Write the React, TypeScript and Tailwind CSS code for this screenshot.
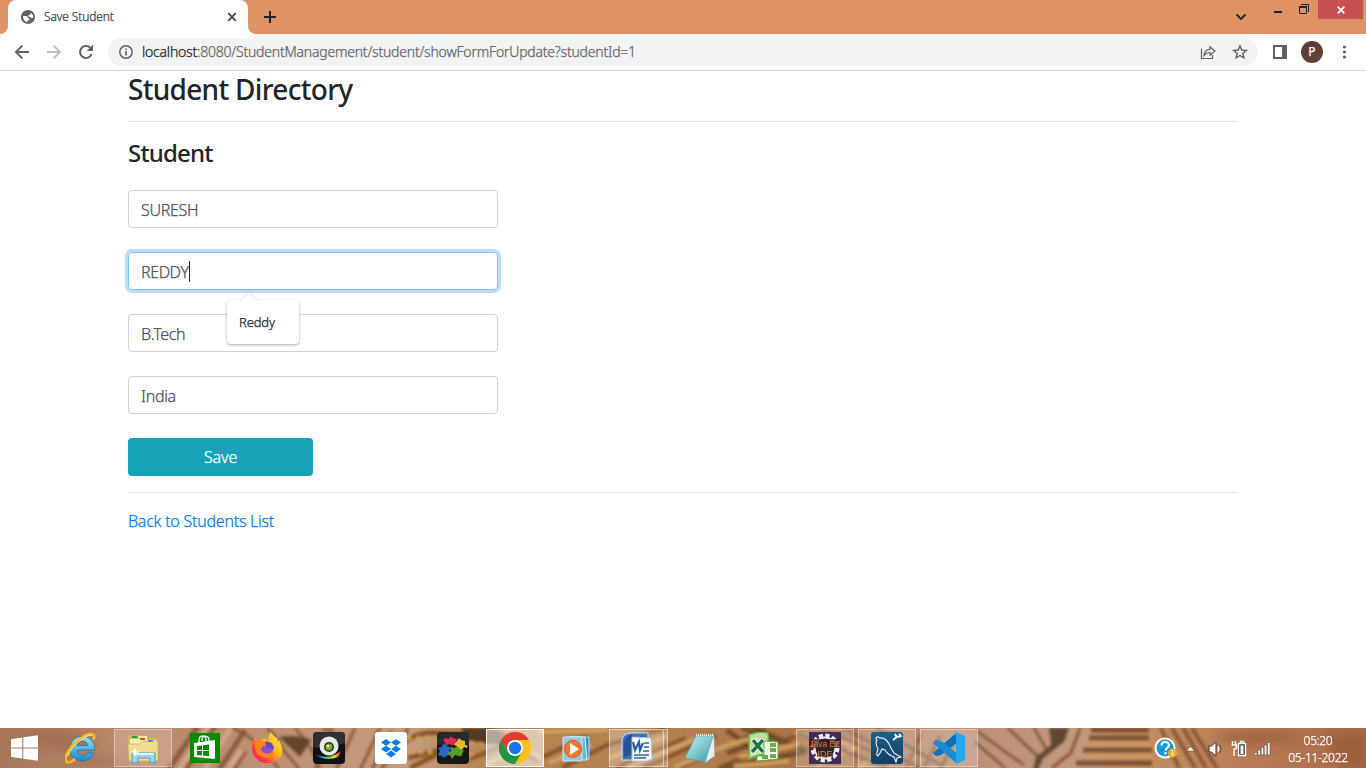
import type { ReactNode } from "react";

const fields = [
  { value: "SURESH", tracking: "tracking-[-0.3px]" },
  { value: "REDDY", tracking: "tracking-[-0.4px]", focused: true },
  { value: "B.Tech", tracking: "tracking-[-0.3px]" },
  { value: "India", tracking: "tracking-[-0.3px]" },
];

function TabStrip() {
  return (
    <header className="flex h-[34px] shrink-0 bg-[#de9266]">
      <svg width="8" height="34" viewBox="0 0 8 34"><path d="M8 26v8H0a8 8 0 0 0 8-8Z" fill="#fff" /></svg>
      <div className="flex h-full w-[240px] items-center rounded-t-[8px] bg-white pl-3 pr-[10px]">
        <svg width="16" height="16" viewBox="0 0 16 16">
          <circle cx="8" cy="8" r="7.1" fill="#5f6368" />
          <path d="M3 7.100h3.200q1.700 0 1.800 1.800l1.400.8v1.500l-2 .4v1.600C4.800 12.800 2.900 10.700 3 7.100ZM8.700 3c.9 0 1.600.3 2.300.7l-.7 1.700-1.800.8-.2 1.400 1.900.3.8 1.100h1.700c0-.7 1-.3 1-.7C13 5.600 11.500 3.200 8.700 3Z" fill="#fff" />
        </svg>
        <span className="ml-2 w-[180px] whitespace-nowrap text-[12px] font-light leading-[16px] tracking-[-0.12px] text-[#3c4043]">Save Student</span>
        <svg className="ml-auto" width="12" height="12" viewBox="0 0 12 12"><path d="m2.200 2.200 7.600 7.600m0-7.600-7.600 7.600" stroke="#3c4043" strokeWidth="1.700" /></svg>
      </div>
      <svg width="8" height="34" viewBox="0 0 8 34"><path d="M0 26v8h8a8 8 0 0 1-8-8Z" fill="#fff" /></svg>
      <svg className="ml-2 mt-[11px]" width="12" height="12" viewBox="0 0 12 12"><path d="M6 0v12M0 6h12" stroke="#202124" strokeWidth="2" /></svg>
      <div className="ml-auto flex">
        <svg className="mt-[13px]" width="12" height="9" viewBox="0 0 12 9"><path d="m1.500 1.500 4.500 4.500 4.500-4.500" fill="none" stroke="#202124" strokeWidth="1.800" /></svg>
        <svg className="ml-[27px] mt-[11px]" width="8" height="2" viewBox="0 0 8 2"><path d="M0 0h8v2H0z" fill="#202124" /></svg>
        <svg className="ml-[17px] mt-1" width="10" height="10" viewBox="0 0 10 10"><path d="M2 .5h7.500V8M.5 3h7v6.500h-7Z" fill="none" stroke="#202124" /><path d="M0 2h8v1.800H0z" fill="#202124" /></svg>
        <div className="ml-[9px] mr-[3px] flex h-[19px] w-[45px] items-center justify-center bg-[#c75050]">
          <svg width="8" height="8" viewBox="0 0 8 8"><path d="m.7.7 6.600 6.600m0-6.600L.7 7.300" stroke="#fff" strokeWidth="1.800" /></svg>
        </div>
      </div>
    </header>
  );
}

function AddressRow() {
  return (
    <div className="flex h-[37px] shrink-0 items-center border-b border-[#d5d7da] bg-white pl-[14px]">
      <svg width="16" height="16" viewBox="0 0 16 16"><path d="M15 8H2m6.300-6.300L2 8l6.300 6.300" fill="none" stroke="#5f6368" strokeWidth="1.900" /></svg>
      <svg className="ml-4" width="16" height="16" viewBox="0 0 16 16"><path d="M1 8h13M7.700 1.700 14 8l-6.300 6.300" fill="none" stroke="#bbbdbf" strokeWidth="1.900" /></svg>
      <svg className="ml-4" width="16" height="16" viewBox="0 0 16 16"><path d="M13.600 10.200a6 6 0 1 1-1.400-6.500L14 5.500" fill="none" stroke="#5f6368" strokeWidth="2" /><path d="M15 .8V7H8.800Z" fill="#5f6368" /></svg>
      <div className="ml-[14px] flex h-7 w-[1150px] items-center rounded-full bg-[#f1f3f4] pl-[11px] pr-[10px]">
        <svg width="14" height="14" viewBox="0 0 14 14"><circle cx="7" cy="7" r="6.200" fill="none" stroke="#5f6368" strokeWidth="1.500" /><path d="M6.200 3.400h1.600V5H6.200zM6.200 6.100h1.600v4.500H6.200z" fill="#5f6368" /></svg>
        <span className="ml-[9px] whitespace-nowrap text-[14px] font-light leading-5 tracking-[-0.21px] text-[#5f6368]"><span className="text-[#202124]">localhost</span>:8080/StudentManagement/student/showFormForUpdate?studentId=1</span>
        <svg className="ml-auto" width="16" height="16" viewBox="0 0 16 16"><path d="M1.500 4.500v10h11V11M4 11.500c.3-4 2.500-6 6-6.200V2.800L15 7l-5 4.200V8.500C7.300 8.400 5.500 9.300 4 11.500Z" fill="none" stroke="#5f6368" strokeWidth="1.200" /></svg>
        <svg className="ml-4" width="16" height="16" viewBox="0 0 16 16"><path d="m8 1.900 1.750 4.150 4.550.4-3.450 3 1.050 4.400L8 11.500l-3.900 2.350 1.050-4.400-3.450-3 4.550-.4Z" fill="none" stroke="#5f6368" strokeWidth="1.400" /></svg>
      </div>
      <svg className="ml-[15px]" width="14" height="14" viewBox="0 0 14 14"><path d="M1 1h12v12H1Z" fill="none" stroke="#5f6368" strokeWidth="2" /><path d="M9 0h5v14H9z" fill="#5f6368" /></svg>
      <div className="ml-[14px] flex size-[22px] items-center justify-center rounded-full bg-[#5d4037] text-[12px] text-white">P</div>
      <svg className="ml-[19px]" width="5" height="14" viewBox="0 0 5 14"><g fill="#5f6368"><circle cx="2.500" cy="2" r="1.600" /><circle cx="2.500" cy="7" r="1.600" /><circle cx="2.500" cy="12" r="1.600" /></g></svg>
    </div>
  );
}

function Suggestion() {
  return (
    <div className="absolute left-[98px] top-[39px] z-10">
      <div className="relative mt-2 h-11 w-[72px] rounded-[4px] bg-white px-3 pt-3 text-[13px] font-light leading-5 tracking-[-0.15px] text-[#202124] shadow-[0_1px_3px_rgba(0,0,0,0.35)]">
        Reddy
        <svg className="absolute -top-2 left-[13px]" width="18" height="10" viewBox="0 0 18 10"><path d="m0 9 9-8 9 8v1H0Z" fill="#fff" /><path d="m.5 8.500 8.500-8 8.500 8" fill="none" stroke="#dcdee0" /></svg>
      </div>
    </div>
  );
}

function StudentPage() {
  return (
    <main className="flex-1 bg-white pl-32 text-[#212529]">
      <h2 className="pt-px text-[28px] font-medium leading-[34px] tracking-[-0.7px] [-webkit-text-stroke:0px]">Student Directory</h2>
      <hr className="mt-[15px] w-[1110px] border-[#e5e5e5]" />
      <h3 className="mt-4 text-[24px] font-medium leading-[29px] tracking-[-0.8px] [-webkit-text-stroke:0px]">Student</h3>
      <form className="mt-[23px] flex flex-col gap-6">
        {fields.map((f) => (
          <div key={f.value} className={f.focused
            ? "relative flex h-[38px] w-[370px] items-center rounded-[4px] border border-[#80bdff] px-3 pt-px shadow-[0_0_0_3px_#bfdeff]"
            : "flex h-[38px] w-[370px] items-center rounded-[4px] border border-[#ced4da] px-3 pt-px"}>
            <span className={`text-[16px] font-light leading-6 text-[#495057] ${f.tracking}`}>{f.value}</span>
            {f.focused && <span className="h-[21px] w-px bg-[#212529]" />}
            {f.focused && <Suggestion />}
          </div>
        ))}
        <button type="button" className="h-[38px] w-[185px] rounded-[4px] bg-[#17a2b8] text-[16px] font-light leading-6 tracking-[-0.1px] text-white">Save</button>
      </form>
      <hr className="mt-4 w-[1110px] border-[#e5e5e5]" />
      <a className="mt-4 block text-[16px] font-light leading-6 tracking-[-0.24px] text-[#007bff]">Back to Students List</a>
    </main>
  );
}

function Icon({ children }: { children: ReactNode }) {
  return <svg width="32" height="32" viewBox="0 0 32 32">{children}</svg>;
}

function Wallpaper() {
  return (
    <svg className="absolute inset-0" width="1366" height="40" viewBox="0 0 1366 40">
      <defs>
        <linearGradient id="wood"><stop offset="0" stopColor="#a97659" /><stop offset=".08" stopColor="#b88567" /><stop offset=".16" stopColor="#bc8e70" /><stop offset=".3" stopColor="#c59c7e" /><stop offset=".36" stopColor="#b58250" /><stop offset=".48" stopColor="#b58151" /><stop offset=".58" stopColor="#ab7447" /><stop offset=".7" stopColor="#bd8f74" /><stop offset=".79" stopColor="#c19a7e" /><stop offset=".84" stopColor="#c28f60" /><stop offset=".92" stopColor="#b77a54" /><stop offset="1" stopColor="#a96b47" /></linearGradient>
        <filter id="soft"><feGaussianBlur stdDeviation="1.500" /></filter>
        <filter id="haze"><feGaussianBlur stdDeviation="5" /></filter>
      </defs>
      <path d="M0 0h1366v40H0z" fill="url(#wood)" />
      <g filter="url(#haze)"><path d="M20 8q50-15 80 8-40 15-80-8M60 35q40-15 75 4Z" fill="#986047" opacity=".5" /><path d="M1210 8q60-15 100 4l-70 8ZM1320 5h46v35h-25Z" fill="#8f512f" opacity=".45" /></g>
      <g filter="url(#soft)" fill="none">
        <path d="m168 42 30-44m-13 44 30-44m4 44 26-40m-12 40 12-19" stroke="#8b5b3a" strokeWidth="5" />
        <path d="m179 42 30-44m-5 44 28-44m-4 44 14-20" stroke="#d0a78a" strokeWidth="5" />
        <path d="M232 0q17 6 33 23l14 18M267 0q10 9 15 20l18 22m-5-42q20 21 25 42" stroke="#865333" strokeWidth="2.500" />
        <path d="M279 9q17-3 32 3l-11 17Z" fill="#65452f" />
        <path d="M322 2h10l-17 39m40-41-19 42m56-39-20 38M380 0l-20 42M408 0q-7 20-28 42" stroke="#8c5934" strokeWidth="3" />
        <path d="M402 15q18-12 35-10l41 2M408 30l32-8m-30 18 28-14" stroke="#885423" strokeWidth="5" />
        <path d="M407 10h28m34 17h18m-77-3h25m35-9h18" stroke="#d2a35c" strokeWidth="4" strokeDasharray="4 5" />
        <path d="M462 0h30l25 11-16 6-38-5Z" fill="#523923" />
        <path d="m470 31 35-14 32 15 50-24m-25 32 45-23 59-17m-50 40 70-30m-43 30 73-32m-37 32 87-40m-48 40 82-34" stroke="#865126" strokeWidth="4" />
        <path d="M485 37q40-24 57-5m-3-28 69-2m-59 33 42-18m18 13 58-22m-40 31 73-30m-25 30 61-25" stroke="#d1a367" strokeWidth="4" />
        <path d="m727 2 30 23m-15-25 60 20m-75 5 42-15m-16-10 54 23m-86 17 84-16" stroke="#71482b" strokeWidth="5" />
        <path d="m729 16 35-8m-25 21 60-13m-65 22 55-5m6-28 60 12m-38 20 45-20m-5 23 49-26" stroke="#d1a05d" strokeWidth="4" />
        <path d="m797 5 71 27m-47-32 65 30m-43-30 75 39m-42-39 65 37m-111-20 55 22" stroke="#865d49" strokeWidth="3" />
        <path d="m884 42 10-34m12 32 15-34m3 34 16-32m1 32 14-29" stroke="#8f6049" strokeWidth="3" />
        <path d="m977 3 23 17 24 17m-49-23 30 26M1008 0l25 24q9 9 15 0L1034 0" stroke="#805337" strokeWidth="2.500" />
        <path d="M1049 0h20l-5 14-21 16-5 12h-5l3-13 15-12Z" fill="#614735" />
        <path d="m1080 0-9 25-19 15" stroke="#8c5233" strokeWidth="3" />
        <path d="M1089 10h60m-66 12h69m-76 13h76M1091 2h58" stroke="#7e4e32" strokeWidth="5" />
        <path d="M1088 16h62m-67 12h69" stroke="#cf955e" strokeWidth="4" />
        <path d="m1161 0 18 40m-7-40 23 40m-12-40 23 40m-14-40 25 40" stroke="#8b563b" strokeWidth="4" />
      </g>
    </svg>
  );
}

const apps: { name: string; open?: boolean; active?: boolean; stacked?: boolean; icon: ReactNode }[] = [
  { name: "ie", icon: <Icon>
    <defs><linearGradient id="ie" x2="0" y2="1"><stop stopColor="#8ee5fc" /><stop offset="1" stopColor="#168bce" /></linearGradient></defs>
    <path d="M30 18H12c.5 6 8 7 10 3h7c-5 12-24 10-24-4C5 0 30 0 30 18ZM12 13.500h11c-1-6-10-6-11 0Z" fill="url(#ie)" stroke="#2277ad" strokeWidth=".8" fillRule="evenodd" />
    <path d="M28 8C32 2 26 0 18 5 6 12-3 27 2 30c2 1 6-1 8-3" fill="none" stroke="#f4bc21" strokeWidth="2.700" /><path d="M27 3C20 3 7 13 3 24" fill="none" stroke="#ffe57c" />
  </Icon> },
  { name: "explorer", open: true, icon: <Icon>
    <path d="M1 5q0-2 3-2h8l2 3h14l3 2v20H2Z" fill="#dab85f" /><path d="M3 7h9V4h8v4h9v20H3Z" fill="#fff0b2" /><path d="M1 12h12l3-3h15v20H2Z" fill="#f0dc91" stroke="#caa850" strokeWidth=".6" />
    <path d="M5 4h5v2H5Z" fill="#10a447" /><path d="M13 6h5v2h-5Z" fill="#e34b34" /><path d="M21 8h5v2h-5Z" fill="#3297dd" />
    <path d="M5 31V21h23v10h-5v-5H11v5Z" fill="#9bd2ec" stroke="#539abc" /><path d="M6 22h21" stroke="#def7ff" strokeWidth="2" /><path d="m8 15 1 4 4 1-4 1-1 4-1-4-4-1 4-1Z" fill="#fff" />
  </Icon> },
  { name: "store", icon: <Icon>
    <path d="M1 1h30v30H1Z" fill="#008a00" /><path d="m5 11 21-3v19l-21-2Z" fill="#fff" /><path d="M10 11V8c0-5 7-6 7 0v2m-4-1V7c0-4 7-4 7 1v2" fill="none" stroke="#fff" strokeWidth="1.300" />
    <path d="m8 14 5-.6V18H8Zm6-.7 6-.8V18h-6ZM8 19h5v4.600L8 23Zm6 0h6v5.300l-6-.7Z" fill="#008a00" />
  </Icon> },
  { name: "firefox", icon: <Icon>
    <defs><linearGradient id="fx" x1="1" y1="0" x2="0" y2="1"><stop stopColor="#fff44f" /><stop offset=".45" stopColor="#ffb01c" /><stop offset=".75" stopColor="#ff3647" /><stop offset="1" stopColor="#e31587" /></linearGradient></defs>
    <path d="M20 0q3 5 6 6l1 4 1-2q8 15-3 21-13 6-21-4C-1 19 1 11 4 5l3 4 4-1 3-2 3 3q0-6 3-9Z" fill="url(#fx)" />
    <circle cx="16" cy="16" r="6.500" fill="#8650ce" /><path d="M5 9q7-2 12 4l-5 1q-4 3 0 6 6 4 11-2-1 10-11 7Q3 23 4 12Z" fill="#ff801f" /><path d="M14 10q7-2 9 7l-7-1Z" fill="#6845b8" />
  </Icon> },
  { name: "camera", icon: <Icon>
    <defs><linearGradient id="rain"><stop stopColor="#8036ff" /><stop offset=".3" stopColor="#19bdf5" /><stop offset=".55" stopColor="#64d92c" /><stop offset=".75" stopColor="#ffcf1d" /><stop offset="1" stopColor="#f13227" /></linearGradient></defs>
    <rect width="32" height="32" rx="4" fill="#111" /><path d="M0 5q0-5 5-5h22q5 0 5 5v6Q15 17 0 15Z" fill="#303030" /><circle cx="16" cy="14" r="9.500" fill="#e7e8e7" /><circle cx="16" cy="15" r="5" fill="#272d20" /><circle cx="16" cy="15" r="3.500" fill="#78ad28" /><circle cx="15" cy="14" r="1.300" fill="#eff4df" /><path d="M3 23q14 5 25-4l-3 6q-12 5-22-2Z" fill="url(#rain)" />
  </Icon> },
  { name: "dropbox", icon: <Icon><rect width="32" height="32" rx="3" fill="#fff" /><path d="m11 7 5 3.500-5 3.300-5-3.300Zm10 0 5 3.500-5 3.300-5-3.300ZM6 17l5-3.200 5 3.200-5 3.400Zm10 0 5-3.200 5 3.200-5 3.400ZM11 22l5-3.400 5 3.400-5 3.400Z" fill="#087ee5" /></Icon> },
  { name: "puzzle", icon: <Icon>
    <rect width="32" height="32" rx="4" fill="#171717" /><path d="M0 5q0-5 5-5h22q5 0 5 5v8H0Z" fill="#292929" />
    <path d="m8 6 4 1q1-4 4-1l4 1-2 4q-2 4-5 1l-4 1-1-3q-3-1 0-4Z" fill="#e92554" /><path d="m20 9 2-3 2 2 4 1v4q4 0 2 3l-3-1-2 3-5-1v-3q-4 0-2-3Z" fill="#e5b92a" /><path d="m5 13 4-1 2 3q3-1 3 2l-2 2 1 4-4 1-2 2-2-2-4-1 2-4-2-3 4-1Z" fill="#2868bf" /><path d="m14 15 4 1 2-2 3 3 4 1-2 4q0 3-3 2l-4-1-3 4-2-4-3-2 4-2Z" fill="#5a9a2c" />
  </Icon> },
  { name: "chrome", active: true, icon: <Icon>
    <circle cx="16" cy="16" r="16" fill="#fbc116" /><path d="M2.100 8A16 16 0 0 1 29.900 8H16L9.100 20Z" fill="#e33b2e" /><path d="M2.100 8A16 16 0 0 0 16 32l6.900-12H9.100Z" fill="#229342" /><circle cx="16" cy="16" r="8" fill="#fff" /><circle cx="16" cy="16" r="6.200" fill="#1a73e8" />
  </Icon> },
  { name: "media", icon: <Icon>
    <path d="M9 5h19v22H9Z" fill="#488cae" stroke="#a8e4f4" /><path d="M6 5h18l2 23H6Z" fill="#66b8d8" stroke="#d6f5fb" /><path d="M2 5h19v24H2Z" fill="#8fc8e0" stroke="#c8edf6" /><circle cx="12" cy="17" r="8.500" fill="#f2792a" stroke="#da5917" /><path d="m9 11 9 6-9 6Z" fill="#fff" />
  </Icon> },
  { name: "word", open: true, stacked: true, icon: <Icon>
    <path d="M9 1h18v27H1V9Q1 2 9 1Z" fill="#3973b7" stroke="#d5e6f7" /><path d="M10 3q-6 1-7 8v14l9-3V3Z" fill="#255394" /><path d="m11 5 19 1 1 21-5 2H11Z" fill="#f8fcff" stroke="#aac4e3" /><path d="m12 10 2 8 4-8 1 8 3-7" fill="none" stroke="#2b60a5" strokeWidth="2.200" /><path d="M23 11h5m-5 4h5m-6 4h6m-15 4h15m-15 3h12" fill="none" stroke="#2b60a5" strokeWidth="1.600" />
  </Icon> },
  { name: "notepad", icon: <Icon>
    <defs><linearGradient id="note" x2="1" y2="1"><stop stopColor="#c5f0f0" /><stop offset=".5" stopColor="#80cad0" /><stop offset="1" stopColor="#3d969b" /></linearGradient></defs>
    <path d="M12 3h17l1 21-10 7Z" fill="#e6eee9" stroke="#889894" strokeWidth=".7" /><path d="M11 4h17l-8 26-20-4Z" fill="url(#note)" stroke="#589a9d" strokeWidth=".7" /><path d="M11 3h18" stroke="#e2e9e5" strokeWidth="2.500" strokeDasharray="1 1" />
  </Icon> },
  { name: "excel", icon: <Icon>
    <path d="M2 3q9-4 19-2l1 22q-9-2-20 4Z" fill="#b9e49f" stroke="#65b545" strokeWidth="1.500" /><path d="m17 9 14 1v17l-21 2v-5h7Z" fill="#f4fff0" stroke="#5cad48" /><path d="M23 11h6v4h-6Zm0 5h6v4h-6Zm0 6h6v4h-6Zm-8 1h6v4h-6Z" fill="#67af48" /><path d="m6 7 10 13M16 7 5 21" stroke="#fff" strokeWidth="5" /><path d="m6 8 10 12M16 8 5 20" stroke="#217245" strokeWidth="3.500" />
  </Icon> },
  { name: "eclipse", open: true, icon: <Icon>
    <path d="M0 0h32v32H0Z" fill="#402b59" /><circle cx="16" cy="16" r="12" fill="none" stroke="#eee" strokeWidth="5" strokeDasharray="4 2.280" /><circle cx="16" cy="16" r="10.500" fill="#302b30" stroke="#e8e8e8" strokeWidth="2" />
    <path d="M0 7h32v9H0ZM8 17h16v8H8Z" fill="#302226" opacity=".75" />
    <g fill="#ff7829" fontFamily="Liberation Sans, sans-serif" fontSize="9" textAnchor="middle"><text x="16" y="14.800" textLength="31" lengthAdjust="spacingAndGlyphs">Java EE</text><text x="16" y="25">IDE</text></g>
  </Icon> },
  { name: "mysql", open: true, icon: <Icon>
    <defs><linearGradient id="sql" x2="0" y2="1"><stop stopColor="#1b608a" /><stop offset="1" stopColor="#123e62" /></linearGradient></defs>
    <rect width="32" height="32" rx="3" fill="url(#sql)" /><path d="M7 24c-2 0-1-4 0-7C4 11 5 9 6 8 3 5 6 4 9 6c6-1 9 5 11 10l3 5q3 2 7 4l-4 1-1 4-2-5q-6-2-9-7l-3-1q-1 3-4 7" fill="none" stroke="#eaf5fb" strokeWidth="1.100" /><path d="m22 8 5-4m-3-2 1 2 3 1m0-3 2 2-2 1" fill="none" stroke="#fff" strokeWidth="1.800" />
  </Icon> },
  { name: "vscode", open: true, icon: <Icon>
    <path d="M23 1 0 21l3 3 5-1L25 10V2Z" fill="#0873bb" /><path d="M3 8 0 11l23 20 2-2v-7L8 9Z" fill="#168ad4" /><path d="m23 0 9 4v24l-9 4-2-2 2-2V4l-2-2Z" fill="#27a7f0" />
  </Icon> },
];

function Taskbar() {
  return (
    <footer className="relative h-10 shrink-0 overflow-hidden">
      <Wallpaper />
      <div className="relative flex h-full">
        <div className="flex w-[50px] items-center pl-[11px]">
          <svg width="27" height="26" viewBox="0 0 27 26"><path d="M0 4.200 11.300 2.500v10H0Zm12.300-1.900L27 .2v12.300H12.300ZM0 13.500h11.300v10L0 21.900Zm12.300 0H27v12.300l-14.700-2.100Z" fill="#fff" /></svg>
        </div>
        {apps.map((a) => (
          <div key={a.name} className="flex w-[62px] justify-center pt-px">
            <div className={a.active
              ? "flex h-[38px] w-[58px] items-center justify-center border border-white/90 bg-white/55"
              : a.stacked
                ? "flex h-[38px] w-[58px]"
                : a.open
                  ? "flex h-[38px] w-[58px] items-center justify-center border border-white/40 bg-white/20"
                  : "flex h-[38px] w-[58px] items-center justify-center"}>
              {a.stacked
                ? <><div className="-ml-px flex w-[55px] items-center justify-center border border-white/50 bg-white/25">{a.icon}</div><div className="w-1 border-y border-r border-white/50 bg-white/20" /></>
                : a.icon}
            </div>
          </div>
        ))}
        <div className="ml-auto flex items-center pt-px">
          <svg width="24" height="24" viewBox="0 0 24 24"><circle cx="11" cy="11" r="9.500" fill="#149bd7" stroke="#fff" strokeWidth="2" /><path d="M7.500 8.500q0-3.500 3.500-3.500 4 0 4 3.300c0 2.700-3.500 2.700-3.500 5.200m0 1.800v2" fill="none" stroke="#fff" strokeWidth="2.200" /><circle cx="18.500" cy="16" r="4.500" fill="#f4ae1d" /><path d="M18.500 13v1.500m0 1v3" stroke="#fff" strokeWidth="1.400" /></svg>
          <svg className="ml-2" width="9" height="6" viewBox="0 0 9 6"><path d="m.5 5 4-4.500 4 4.500Z" fill="#fff" stroke="#58382b" strokeWidth=".5" /></svg>
          <svg className="ml-[13px]" width="14" height="16" viewBox="0 0 14 16"><path d="M1 5h2.500L8 1v14l-4.500-4H1Z" fill="#fff" stroke="#4e3429" /><path d="M10 5.500q1.500 2.500 0 5" fill="none" stroke="#fff" strokeWidth="1.500" /><path d="M11.800 4q2.500 4 0 8" fill="none" stroke="#4e3429" strokeWidth=".8" /></svg>
          <svg className="ml-[9px]" width="16" height="17" viewBox="0 0 16 17"><path d="M7.500 3.500h7v12h-7ZM9.500 1.500h3v2h-3Z" fill="#4e3429" stroke="#fff" strokeWidth="1.400" /><path d="M9.500 5.500h3V14h-3Z" fill="#fff" /><path d="M1.500 1v4m3-4v4M.5 5h5v3q-1 1-2.500 1v7" fill="none" stroke="#fff" strokeWidth="1.500" /></svg>
          <svg className="ml-[7px]" width="17" height="14" viewBox="0 0 17 14"><path d="M.500 10.500h2.500V13H.500ZM4 8h2.500v5H4Zm3.200-2.500h2.500V13H7.200Zm3.100-2.500h2.500v10h-2.500ZM13.500.5H16V13h-2.500Z" fill="#fff" stroke="#513629" strokeWidth=".5" /></svg>
          <div className="ml-[9px] mr-[10px] w-[76px] whitespace-nowrap text-center text-[12px] font-light leading-[17px] tracking-[-0.3px] text-white"><div>05:20</div><div>05-11-2022</div></div>
        </div>
      </div>
    </footer>
  );
}

export default function App() {
  return (
    <div className="flex h-[768px] w-[1366px] flex-col overflow-hidden bg-white font-['Noto_Sans','Open_Sans',sans-serif] [-webkit-text-stroke:0.25px]">
      <TabStrip />
      <AddressRow />
      <StudentPage />
      <Taskbar />
    </div>
  );
}
